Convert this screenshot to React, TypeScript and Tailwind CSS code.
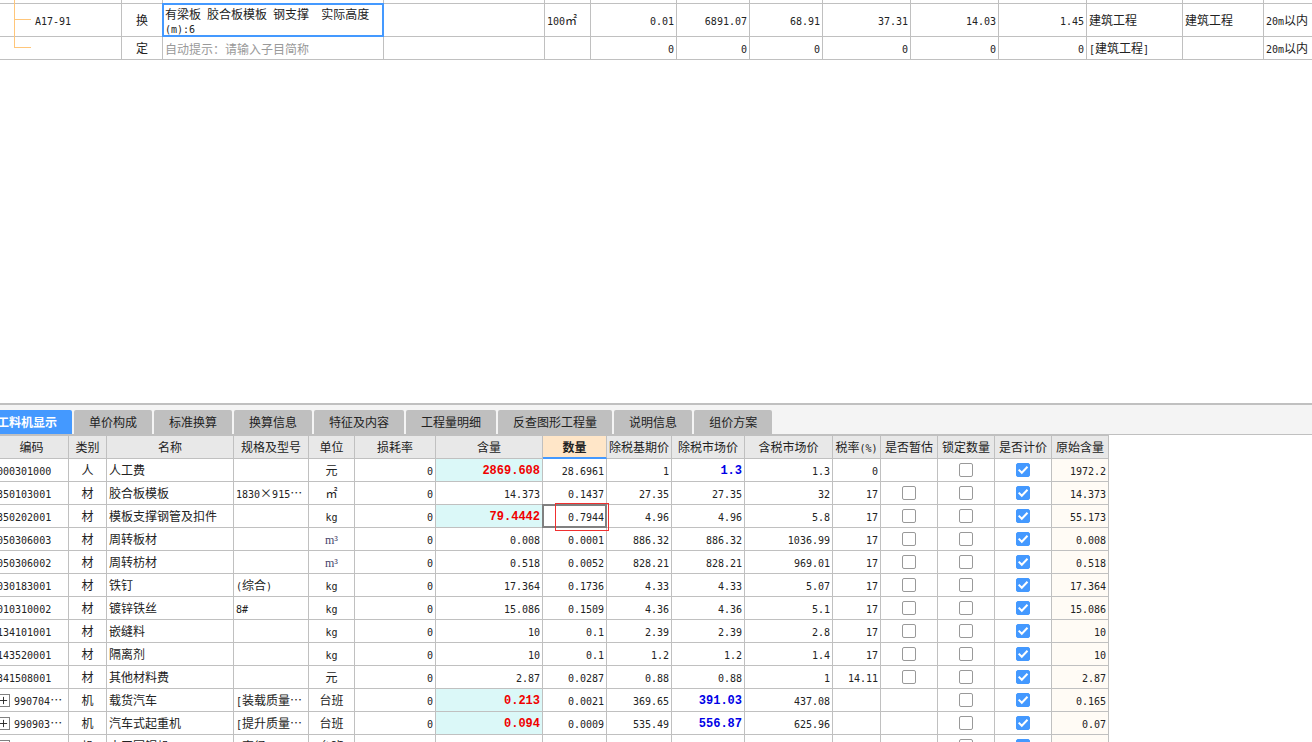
import type { ReactNode } from 'react'
import { Plus } from 'lucide-react'

interface Resource {
  code: string
  expandable?: boolean
  kind: string
  name: string
  spec?: string
  unit: string
  content: string
  contentChanged?: boolean
  quantity: string
  basePrice: string
  marketPrice: string
  marketChanged?: boolean
  taxedPrice: string
  taxRate?: string
  provisional?: boolean
  original: string
}

const tabs = ['工料机显示', '单价构成', '标准换算', '换算信息', '特征及内容', '工程量明细', '反查图形工程量', '说明信息', '组价方案']

const columns = [
  { title: '编码', width: 'w-[74px]' },
  { title: '类别', width: 'w-[38px]' },
  { title: '名称', width: 'w-[127px]' },
  { title: '规格及型号', width: 'w-[75px]' },
  { title: '单位', width: 'w-[46px]' },
  { title: '损耗率', width: 'w-[81px]' },
  { title: '含量', width: 'w-[107px]' },
  { title: '数量', width: 'w-[64px]' },
  { title: '除税基期价', width: 'w-[65px]' },
  { title: '除税市场价', width: 'w-[73px]' },
  { title: '含税市场价', width: 'w-[88px]' },
  { title: '税率(%)', width: 'w-[48px]' },
  { title: '是否暂估', width: 'w-[57px]' },
  { title: '锁定数量', width: 'w-[57px]' },
  { title: '是否计价', width: 'w-[57px]' },
  { title: '原始含量', width: 'w-[57px]' },
]

const resources: Resource[] = [
  { code: '000301000', kind: '人', name: '人工费', unit: '元', content: '2869.608', contentChanged: true, quantity: '28.6961', basePrice: '1', marketPrice: '1.3', marketChanged: true, taxedPrice: '1.3', taxRate: '0', original: '1972.2' },
  { code: '350103001', kind: '材', name: '胶合板模板', spec: '1830×915…', unit: '㎡', content: '14.373', quantity: '0.1437', basePrice: '27.35', marketPrice: '27.35', taxedPrice: '32', taxRate: '17', provisional: true, original: '14.373' },
  { code: '350202001', kind: '材', name: '模板支撑钢管及扣件', unit: 'kg', content: '79.4442', contentChanged: true, quantity: '0.7944', basePrice: '4.96', marketPrice: '4.96', taxedPrice: '5.8', taxRate: '17', provisional: true, original: '55.173' },
  { code: '050306003', kind: '材', name: '周转板材', unit: 'm³', content: '0.008', quantity: '0.0001', basePrice: '886.32', marketPrice: '886.32', taxedPrice: '1036.99', taxRate: '17', provisional: true, original: '0.008' },
  { code: '050306002', kind: '材', name: '周转枋材', unit: 'm³', content: '0.518', quantity: '0.0052', basePrice: '828.21', marketPrice: '828.21', taxedPrice: '969.01', taxRate: '17', provisional: true, original: '0.518' },
  { code: '030183001', kind: '材', name: '铁钉', spec: '(综合)', unit: 'kg', content: '17.364', quantity: '0.1736', basePrice: '4.33', marketPrice: '4.33', taxedPrice: '5.07', taxRate: '17', provisional: true, original: '17.364' },
  { code: '010310002', kind: '材', name: '镀锌铁丝', spec: '8#', unit: 'kg', content: '15.086', quantity: '0.1509', basePrice: '4.36', marketPrice: '4.36', taxedPrice: '5.1', taxRate: '17', provisional: true, original: '15.086' },
  { code: '134101001', kind: '材', name: '嵌缝料', unit: 'kg', content: '10', quantity: '0.1', basePrice: '2.39', marketPrice: '2.39', taxedPrice: '2.8', taxRate: '17', provisional: true, original: '10' },
  { code: '143520001', kind: '材', name: '隔离剂', unit: 'kg', content: '10', quantity: '0.1', basePrice: '1.2', marketPrice: '1.2', taxedPrice: '1.4', taxRate: '17', provisional: true, original: '10' },
  { code: '341508001', kind: '材', name: '其他材料费', unit: '元', content: '2.87', quantity: '0.0287', basePrice: '0.88', marketPrice: '0.88', taxedPrice: '1', taxRate: '14.11', provisional: true, original: '2.87' },
  { code: '990704…', expandable: true, kind: '机', name: '载货汽车', spec: '[装载质量…', unit: '台班', content: '0.213', contentChanged: true, quantity: '0.0021', basePrice: '369.65', marketPrice: '391.03', marketChanged: true, taxedPrice: '437.08', original: '0.165' },
  { code: '990903…', expandable: true, kind: '机', name: '汽车式起重机', spec: '[提升质量…', unit: '台班', content: '0.094', contentChanged: true, quantity: '0.0009', basePrice: '535.49', marketPrice: '556.87', marketChanged: true, taxedPrice: '625.96', original: '0.07' },
  { code: '990706…', expandable: true, kind: '机', name: '木工圆锯机', spec: '[直径500]', unit: '台班', content: '', quantity: '', basePrice: '', marketPrice: '', taxedPrice: '', original: '' },
]

// Latin runs are set smaller so that two of them take one Chinese character
function Mixed({ text }: { text: string }) {
  return (
    <>
      {text.split(/([\x20-\x7e]+)/).map((part, i) =>
        i % 2 === 1 ? (
          <span key={i} className="font-['DejaVu_Sans_Mono',monospace] text-[10px] leading-none whitespace-pre">{part}</span>
        ) : (
          part
        )
      )}
    </>
  )
}

interface CellProps {
  children?: ReactNode
  className?: string
}

function Cell({ children, className = '' }: CellProps) {
  return (
    <td className={`border-r border-b border-[#c0c0c0] px-[2px] py-0 whitespace-nowrap ${className}`}>
      {children}
    </td>
  )
}

function NumberCell({ value = '', tone = '' }: { value?: string; tone?: string }) {
  return (
    <Cell className={`text-right ${tone}`}>
      <Mixed text={value} />
    </Cell>
  )
}

function ChangedCell({ value, tone }: { value: string; tone: string }) {
  return <Cell className={`pt-px text-right font-['Liberation_Mono',monospace] font-bold ${tone}`}>{value}</Cell>
}

function CheckCell({ label, checked = false, hidden = false }: { label: string; checked?: boolean; hidden?: boolean }) {
  return (
    <Cell>
      {!hidden && (
        <label className="relative mx-auto block size-[14px]">
          <input
            type="checkbox"
            aria-label={label}
            defaultChecked={checked}
            className="peer block size-[14px] appearance-none rounded-[2px] border border-[#999] bg-white checked:border-[#4499ff] checked:bg-[#4499ff]"
          />
          <svg
            viewBox="0 0 14 14"
            className="pointer-events-none absolute inset-0 hidden size-[14px] fill-none stroke-white stroke-2 peer-checked:block"
          >
            <path d="M2.7 6.6 5.8 9.7 11.5 3.8" />
          </svg>
        </label>
      )}
    </Cell>
  )
}

function EstimateTable() {
  return (
    <table className="w-full table-fixed border-separate border-spacing-0">
      <colgroup>
        <col className="w-[122px]" />
        <col className="w-[41px]" />
        <col className="w-[221px]" />
        <col className="w-[161px]" />
        <col className="w-[46px]" />
        <col className="w-[86px]" />
        <col className="w-[73px]" />
        <col className="w-[73px]" />
        <col className="w-[88px]" />
        <col className="w-[88px]" />
        <col className="w-[88px]" />
        <col className="w-[96px]" />
        <col className="w-[81px]" />
        <col />
      </colgroup>
      <tbody>
        <tr className="h-1">
          {Array.from({ length: 14 }, (_, i) => (
            <Cell key={i} className="relative last:border-r-0">
              {i === 0 && <span className="absolute top-0 left-[14px] h-1 w-px bg-[#ffc67a]" />}
            </Cell>
          ))}
        </tr>
        <tr className="h-[33px]">
          <Cell className="relative">
            <span className="absolute top-0 left-[14px] h-[33px] w-px bg-[#ffc67a]" />
            <span className="absolute top-[15px] left-[14px] h-px w-[17px] bg-[#ffc67a]" />
            <span className="ml-[33px]"><Mixed text="A17-91" /></span>
          </Cell>
          <Cell className="text-center">换</Cell>
          <Cell className="relative">
            <span className="absolute -inset-px border-2 border-[#4499ff]" />
            <p className="pt-px leading-[14px]">
              <Mixed text="有梁板 胶合板模板 钢支撑  实际高度" />
              <br />
              <Mixed text="(m):6" />
            </p>
          </Cell>
          <Cell />
          <Cell><Mixed text="100㎡" /></Cell>
          <NumberCell value="0.01" />
          <NumberCell value="6891.07" />
          <NumberCell value="68.91" />
          <NumberCell value="37.31" />
          <NumberCell value="14.03" />
          <NumberCell value="1.45" />
          <Cell>建筑工程</Cell>
          <Cell>建筑工程</Cell>
          <Cell className="last:border-r-0"><Mixed text="20m以内" /></Cell>
        </tr>
        <tr className="h-[23px]">
          <Cell className="relative">
            <span className="absolute top-0 left-[14px] h-[11px] w-[17px] border-b border-l border-[#ffc67a]" />
          </Cell>
          <Cell className="text-center">定</Cell>
          <Cell>
            <input
              aria-label="子目简称"
              placeholder="自动提示：请输入子目简称"
              className="block h-[22px] w-full outline-none placeholder:text-[#999]"
            />
          </Cell>
          <Cell />
          <Cell />
          {Array.from({ length: 6 }, (_, i) => (
            <NumberCell key={i} value="0" />
          ))}
          <Cell><Mixed text="[建筑工程]" /></Cell>
          <Cell />
          <Cell className="last:border-r-0"><Mixed text="20m以内" /></Cell>
        </tr>
      </tbody>
    </table>
  )
}

function ResourceRow({ item, active }: { item: Resource; active: boolean }) {
  return (
    <tr className="h-[23px]">
      <Cell>
        {item.expandable ? (
          <div className="flex items-center gap-1">
            <button aria-label="展开" className="flex size-[13px] shrink-0 items-center justify-center border border-[#808080]">
              <Plus className="size-[11px] shrink-0" strokeWidth={2} />
            </button>
            <span><Mixed text={item.code} /></span>
          </div>
        ) : (
          <Mixed text={item.code} />
        )}
      </Cell>
      <Cell className="text-center">{item.kind}</Cell>
      <Cell>{item.name}</Cell>
      <Cell><Mixed text={item.spec ?? ''} /></Cell>
      <Cell className="text-center">
        {item.unit === 'm³' ? (
          <span className="font-['Liberation_Serif',serif] text-[#44446a]">{item.unit}</span>
        ) : (
          <Mixed text={item.unit} />
        )}
      </Cell>
      <NumberCell value="0" />
      {item.contentChanged ? (
        <ChangedCell value={item.content} tone="bg-[#dbf8f8] text-[#f00000]" />
      ) : (
        <NumberCell value={item.content} />
      )}
      <Cell className="relative text-right">
        <Mixed text={item.quantity} />
        {active && (
          <>
            <span className="absolute -inset-px border-2 border-[#808080]" />
            <span className="absolute -top-[2px] -right-[3px] z-10 h-7 w-[54px] border border-[#f03030]" />
          </>
        )}
      </Cell>
      <NumberCell value={item.basePrice} />
      {item.marketChanged ? (
        <ChangedCell value={item.marketPrice} tone="text-[#0000e6]" />
      ) : (
        <NumberCell value={item.marketPrice} />
      )}
      <NumberCell value={item.taxedPrice} />
      <NumberCell value={item.taxRate} />
      <CheckCell label={`${item.name} 是否暂估`} hidden={!item.provisional} />
      <CheckCell label={`${item.name} 锁定数量`} />
      <CheckCell label={`${item.name} 是否计价`} checked />
      <NumberCell value={item.original} tone="bg-[#fffbf5]" />
    </tr>
  )
}

// Scrolled a few pixels to the right, so the first column starts off screen
function ResourceTable() {
  return (
    <table className="-ml-[5px] w-[1114px] table-fixed border-separate border-spacing-0 border-t border-[#c0c0c0]">
      <thead>
        <tr className="h-[23px] bg-[#e8e8e8]">
          {columns.map(({ title, width }) => (
            <th
              key={title}
              className={`border-r border-[#c0c0c0] p-0 whitespace-nowrap ${width} ${
                title === '数量' ? 'border-b-2 border-b-[#4499ff] bg-[#ffe6c8] font-bold' : 'border-b font-normal'
              }`}
            >
              <Mixed text={title} />
            </th>
          ))}
        </tr>
      </thead>
      <tbody>
        {resources.map((item) => (
          <ResourceRow key={item.code} item={item} active={item.code === '350202001'} />
        ))}
      </tbody>
    </table>
  )
}

export default function App() {
  return (
    <div className="flex h-screen flex-col overflow-hidden bg-white font-['Noto_Sans_CJK_SC',sans-serif] text-[12px] leading-4 text-[#222]">
      <section className="min-h-0 flex-[403] overflow-hidden">
        <EstimateTable />
      </section>

      <section className="min-h-0 flex-[337] overflow-hidden border-t-2 border-[#c0c0c0]">
        <nav className="flex gap-[2px] border-b border-[#c0c0c0] bg-[#f4f4f4] pt-[5px]">
          {tabs.map((tab, i) => (
            <button
              key={tab}
              className={`h-6 shrink-0 rounded-t-[2px] px-[15px] ${
                i === 0 ? '-ml-[18px] bg-[#4499ff] font-bold text-white' : 'bg-[#bfbfbf] text-[#222]'
              }`}
            >
              {tab}
            </button>
          ))}
        </nav>
        <ResourceTable />
      </section>
    </div>
  )
}
